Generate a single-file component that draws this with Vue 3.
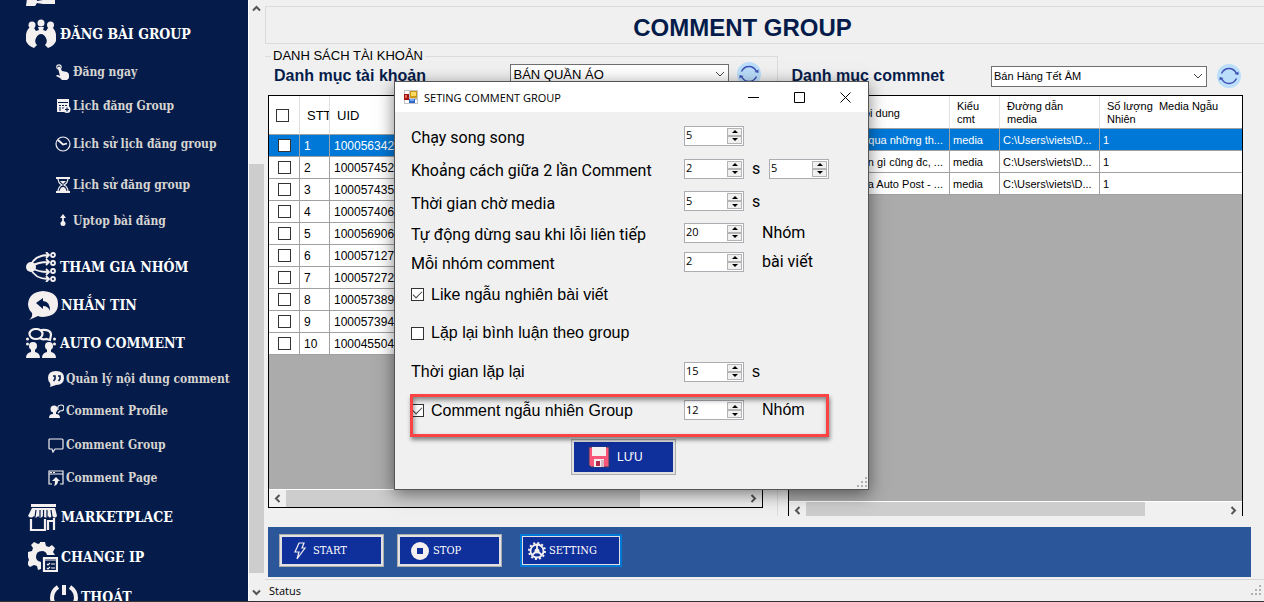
<script setup>
import { ref } from 'vue'

const accounts = ref([
  '100056342', '100057452', '100057435', '100057406', '100056906',
  '100057127', '100057272', '100057389', '100057394', '100045504',
])

const comments = ref([
  { text: 'qua những th...', kind: 'media', path: 'C:\\Users\\viets\\D...', count: 1 },
  { text: 'n gì cũng đc, ...', kind: 'media', path: 'C:\\Users\\viets\\D...', count: 1 },
  { text: 'ja Auto Post - ...', kind: 'media', path: 'C:\\Users\\viets\\D...', count: 1 },
])

const parallel = ref(5)
const delayMin = ref(2)
const delayMax = ref(5)
const mediaWait = ref(5)
const errorLimit = ref(20)
const perGroup = ref(2)
const repeatTime = ref(15)
const randomGroups = ref(12)
const likeRandom = ref(true)
const repeatComment = ref(false)
const commentRandom = ref(true)
</script>

<template>
  <div class="app">
    <div class="window">
      <nav class="sidebar">
        <a class="main cut" href="#" aria-label="Menu">
          <svg class="ico" viewBox="0 0 30 30"><path d="M2 14h8l1 10 6-1v-2h12v6H17l-6-1-2 3H0z" /></svg>
        </a>
        <a class="main" href="#">
          <svg class="ico" viewBox="0 0 30 30"><circle cx="15" cy="4" r="3.500" /><circle cx="6" cy="6" r="3.500" /><circle cx="24.500" cy="6" r="3.500" /><path d="M12 8h6l-1 3 3 1 2-3h5q3 3 3 8v5q-2 5-8 7l-3-3q3-3 1-7-2-4-5-4t-5 4q-2 4 1 7l-3 3q-6-2-8-7v-5q0-5 3-8h5l2 3 3-1z" /></svg>
          <span>ĐĂNG BÀI GROUP</span>
        </a>
        <div class="subs first">
          <a class="sub" href="#">
            <svg class="ico" viewBox="0 0 16 16"><circle cx="4" cy="3" r="2.200" class="line" /><path d="M3 3q1-1 2 0l2 4 5 1q2 1 2 3v3l-2 2H7l-2-2-4-2q1-2 4 0L3 4z" /></svg>
            <span>Đăng ngay</span>
          </a>
          <a class="sub" href="#">
            <svg class="ico" viewBox="0 0 16 16"><path d="M2 1h12v8H9v5H2z" /><path d="M3 4.500h10M4 7.500h2m1 0h2m1 0h2M4 10h2m1 0h2M4 12h2" class="cutline" /><circle cx="12" cy="11.500" r="3.500" /><path d="M12 9.500v4M10 11.500h4" class="cutline" /></svg>
            <span>Lịch đăng Group</span>
          </a>
          <a class="sub" href="#">
            <svg class="ico" viewBox="0 0 16 16"><circle cx="8" cy="8" r="7" class="line" /><path d="M3 4l5 4.500 4-1" class="line thick" /></svg>
            <span>Lịch sử lịch đăng group</span>
          </a>
          <a class="sub" href="#">
            <svg class="ico" viewBox="0 0 16 16"><path d="M1 1h14M1 15h14" class="line thick" /><path d="M3 1q0 5 4 7-4 2-4 7M13 1q0 5-4 7 4 2 4 7" class="line" /><path d="M5 4h6L8 7zM4.500 14q1-4 3.500-4t3.500 4z" /></svg>
            <span>Lịch sử đăng group</span>
          </a>
          <a class="sub" href="#">
            <svg class="ico" viewBox="0 0 16 16"><path d="M8 3v7" class="line thick" /><path d="M5 5l3-4 3 4z" /><circle cx="8" cy="10.500" r="2.500" /></svg>
            <span>Uptop bài đăng</span>
          </a>
        </div>
        <a class="main" href="#">
          <svg class="ico" viewBox="0 0 30 30"><circle cx="5" cy="15" r="5" /><path d="M4 14Q9 3 22 3M6 14q6-4 16-4M6 16q6 4 16 4M4 16q5 11 18 11M20 0l3 3-3 3M20 7l3 3-3 3M20 17l3 3-3 3M20 24l3 3-3 3" class="line thick" /><g class="line thick"><circle cx="27" cy="3" r="2" /><circle cx="27" cy="11" r="2" /><circle cx="27" cy="19" r="2" /><circle cx="27" cy="27" r="2" /></g></svg>
          <span>THAM GIA NHÓM</span>
        </a>
        <a class="main inset" href="#">
          <svg class="ico" viewBox="0 0 30 30"><path d="M15 1q15 1 15 13T15 27q-3 0-5-1l-9 4q4-3 3-7-4-4-4-9Q1 2 15 1z" /><path d="M8 13l7-5v3q7 0 7 10-2-5-7-5v3z" class="hole" /></svg>
          <span>NHẮN TIN</span>
        </a>
        <a class="main" href="#">
          <svg class="ico" viewBox="0 0 30 30"><ellipse cx="10" cy="6" rx="6.500" ry="5" class="line fat" /><path d="M15 2q10-1 10 5l-1 5-4-1q-4 1-6-1" class="line fat" /><circle cx="7" cy="18" r="4" /><circle cx="23" cy="18" r="4" /><path d="M0 30q0-5 5-6v-4h4v4q5 1 5 6zM16 30q0-5 5-6v-4h4v4q5 1 5 6z" /><circle cx="1.500" cy="11" r="1.500" /><circle cx="1.500" cy="16" r="1.500" /><circle cx="28.500" cy="11" r="1.500" /><circle cx="28.500" cy="16" r="1.500" /></svg>
          <span>AUTO COMMENT</span>
        </a>
        <div class="subs second">
          <a class="sub" href="#">
            <svg class="ico" viewBox="0 0 16 16"><path d="M8 0q8 0 8 7t-8 7l-6 2q1-2 0-4-2-2-2-5 0-7 8-7z" /><path d="M5 5h2v3L5.500 10M10 5h2v3l-1.500 2" class="hole-line" /></svg>
            <span>Quản lý nội dung comment</span>
          </a>
          <a class="sub" href="#">
            <svg class="ico" viewBox="0 0 16 16"><circle cx="6" cy="6" r="3.500" /><path d="M1 15q0-4 4-4V8h3v3q4 0 4 4z" /><path d="M10 7q-1-5 3-5 3 0 3 3t-4 3l-2 2" class="line" /></svg>
            <span>Comment Profile</span>
          </a>
          <a class="sub" href="#">
            <svg class="ico" viewBox="0 0 16 16"><path d="M2 2h12q1 0 1 1v8q0 1-1 1H7l-2 3-1-3H2q-1 0-1-1V3q0-1 1-1z" class="line" /></svg>
            <span>Comment Group</span>
          </a>
          <a class="sub" href="#">
            <svg class="ico" viewBox="0 0 16 16"><path d="M4 14H1V1h14v13h-3M1 4h14" class="line" /><path d="M2 2.500h2m1 0h2" class="line" /><path d="M8 7l4 4h-2q0 4-4 5 1-2 1-5H4z" /></svg>
            <span>Comment Page</span>
          </a>
        </div>
        <a class="main inset" href="#">
          <svg class="ico" viewBox="0 0 30 30"><path d="M3 2h25v3H3zM4 6h23l2 8q-2 3-5 0-2 3-4 0-2 3-5 0-2 3-5 0-2 3-4 0-3 3-6 0z" /><path d="M8 8l-1 7M12 8v7M15.500 8v7M19 8v7M23 8l1 7" class="cutline" /><path d="M3 17v11h14V17M20 28V19h6v9M26 16v3" class="line fat" /></svg>
          <span>MARKETPLACE</span>
        </a>
        <a class="main inset tall" href="#">
          <svg class="ico" viewBox="0 0 30 30"><path d="M12 0h5l1 4 3 1 3-2 3 3-2 4 2 3H19q-1-4-5-4-6 0-6 6 0 4 5 5v7l-3 1-1-4-3-1-4 2-3-3 2-4-1-3H0v-5l4-1 1-3-2-3 3-3 4 2 2-1z" /><path d="M16 16h13v13H16z" class="line fat boxed" /><path d="M17 18h11M19 22l1 1 2-2m1 1h4m-8 4l1 1 2-2m1 1h4" class="line" /></svg>
          <span>CHANGE IP</span>
        </a>
        <a class="main exit" href="#">
          <svg class="ico" viewBox="0 0 30 30"><path d="M9 5Q3 9 3 16q1 10 12 11 11-1 12-11 0-7-6-11M15 3v10" class="line bold" /></svg>
          <span>THOÁT</span>
        </a>
      </nav>

      <div class="vscroll">
        <button class="arrow" aria-label="Scroll up"><svg viewBox="0 0 9 9"><path d="M1 6.500l3.500-3.500L8 6.500" /></svg></button>
        <div class="before"></div>
        <div class="thumb"></div>
        <div class="after"></div>
        <button class="arrow" aria-label="Scroll down"><svg viewBox="0 0 9 9"><path d="M1 2.500L4.500 6 8 2.500" /></svg></button>
      </div>

      <main class="content">
        <header class="title"><h1>COMMENT GROUP</h1></header>

        <div class="columns">
          <fieldset class="accounts">
            <legend>DANH SÁCH TÀI KHOẢN</legend>
            <div class="bar left">
              <h2>Danh mục tài khoản</h2>
              <div class="picker">
                <span class="combo large">
                  <select aria-label="Danh mục tài khoản"><option>BÁN QUẦN ÁO</option></select>
                  <svg viewBox="0 0 10 6"><path d="M1 1l4 4 4-4" /></svg>
                </span>
                <button class="refresh" aria-label="Refresh">
                  <svg viewBox="0 0 24 24"><circle cx="12" cy="12" r="12" /><path d="M4.500 9.500Q7 4.500 12 4.500q5 0 7.500 5M19.500 14.500q-2.500 5-7.500 5-5 0-7.500-5" class="arc" /><path d="M17.500 10l4 1V7.500zM6.500 14l-4-1v3.500z" class="tip" /></svg>
                </button>
              </div>
            </div>
            <div class="grid">
              <div class="rows">
                <table class="acc">
                  <colgroup><col class="c-check"><col class="c-no"><col></colgroup>
                  <thead>
                    <tr><th><input type="checkbox" aria-label="Select all"></th><th class="clip">STT</th><th>UID</th></tr>
                  </thead>
                  <tbody>
                    <tr v-for="(uid, i) in accounts" :key="uid" :class="{ on: i === 0 }">
                      <td><input type="checkbox" :aria-label="'Select ' + uid"></td>
                      <td>{{ i + 1 }}</td>
                      <td>{{ uid }}</td>
                    </tr>
                  </tbody>
                </table>
              </div>
              <div class="hscroll">
                <button class="arrow" aria-label="Scroll left"><svg viewBox="0 0 9 9"><path d="M6.500 1L3 4.500 6.500 8" /></svg></button>
                <div class="track"><div class="thumb"></div></div>
                <button class="arrow" aria-label="Scroll right"><svg viewBox="0 0 9 9"><path d="M2.500 1L6 4.500 2.500 8" /></svg></button>
              </div>
            </div>
          </fieldset>

          <section class="comments">
            <div class="bar right">
              <h2>Danh mục commnet</h2>
              <div class="picker">
                <span class="combo">
                  <select aria-label="Danh mục commnet"><option>Bán Hàng Tết ÂM</option></select>
                  <svg viewBox="0 0 10 6"><path d="M1 1l4 4 4-4" /></svg>
                </span>
                <button class="refresh" aria-label="Refresh">
                  <svg viewBox="0 0 24 24"><circle cx="12" cy="12" r="12" /><path d="M4.500 9.500Q7 4.500 12 4.500q5 0 7.500 5M19.500 14.500q-2.500 5-7.500 5-5 0-7.500-5" class="arc" /><path d="M17.500 10l4 1V7.500zM6.500 14l-4-1v3.500z" class="tip" /></svg>
                </button>
              </div>
            </div>
            <div class="grid open">
              <div class="rows">
                <table class="com">
                  <colgroup><col><col class="c-kind"><col class="c-path"><col class="c-count"></colgroup>
                  <thead>
                    <tr><th>Nội dung</th><th>Kiểu<br>cmt</th><th>Đường dẫn<br>media</th><th>Số lượng&nbsp; Media Ngẫu<br>Nhiên</th></tr>
                  </thead>
                  <tbody>
                    <tr v-for="(c, i) in comments" :key="c.text" :class="{ on: i === 0 }">
                      <td>{{ c.text }}</td><td>{{ c.kind }}</td><td>{{ c.path }}</td><td>{{ c.count }}</td>
                    </tr>
                  </tbody>
                </table>
              </div>
              <div class="hscroll">
                <button class="arrow" aria-label="Scroll left"><svg viewBox="0 0 9 9"><path d="M6.500 1L3 4.500 6.500 8" /></svg></button>
                <div class="track"><div class="thumb wide"></div></div>
                <button class="arrow" aria-label="Scroll right"><svg viewBox="0 0 9 9"><path d="M2.500 1L6 4.500 2.500 8" /></svg></button>
              </div>
            </div>
          </section>
        </div>

        <div class="actions">
          <button class="act">
            <svg class="ico bolt" viewBox="0 0 12 18"><path d="M5 1h5L8 6h3L3 17l2-7H1z" class="line" /></svg>
            <span>START</span>
          </button>
          <button class="act stop">
            <svg class="ico disc" viewBox="0 0 18 18"><circle cx="9" cy="9" r="9" /><path d="M6 6h6v6H6z" class="blue" /></svg>
            <span>STOP</span>
          </button>
          <button class="act focus">
            <svg class="ico gear" viewBox="0 0 18 18"><circle cx="9" cy="9" r="6.500" class="line thick" /><circle cx="9" cy="9" r="8" class="teeth" /><circle cx="9" cy="9" r="2.500" /><path d="M9 9V3M9 9l-5 4M9 9l5 4" class="line thick" /></svg>
            <span>SETTING</span>
          </button>
        </div>

        <footer class="status">
          <span>Status</span>
          <svg class="grip" viewBox="0 0 11 11"><path d="M8 0h2v2H8zM4 4h2v2H4zM8 4h2v2H8zM0 8h2v2H0zM4 8h2v2H4zM8 8h2v2H8z" /></svg>
        </footer>
      </main>
    </div>

    <div class="dialog" role="dialog" aria-label="SETING COMMENT GROUP">
      <div class="caption">
        <svg class="logo" viewBox="0 0 14 14"><path d="M0 0h14v14H0z" fill="#c4c4c4" /><path d="M1 1h4v3H1zM1 10h4v3H1zM11 10h2v3h-2z" fill="#fff" /><path d="M6 1h7v7H6z" fill="#c99a18" /><path d="M7 2h5v4H7z" fill="#ffd862" /><path d="M0 4h5v6H0z" fill="#a31515" /><path d="M1 5h2v3H1z" fill="#e66a50" /><path d="M5 9h6v4H5z" fill="#2f68c8" /><path d="M6 9h4v2H6z" fill="#79aaf5" /></svg>
        <span class="name">SETING COMMENT GROUP</span>
        <button aria-label="Minimize"><svg viewBox="0 0 11 11"><path d="M0 5.500h11" /></svg></button>
        <button aria-label="Maximize"><svg viewBox="0 0 11 11"><path d="M0.500 0.500h10v10h-10z" /></svg></button>
        <button aria-label="Close"><svg viewBox="0 0 11 11"><path d="M0.500 0.500l10 10M10.500 0.500l-10 10" /></svg></button>
      </div>

      <form class="form" @submit.prevent>
        <div class="line-row">
          <label for="parallel">Chạy song song</label>
          <span class="spin"><input id="parallel" v-model="parallel" type="number"><span class="ud"><button type="button" aria-label="Up" @click="parallel++"></button><button type="button" aria-label="Down" @click="parallel--"></button></span></span>
        </div>
        <div class="line-row">
          <label for="delay-min">Khoảng cách giữa 2 lần Comment</label>
          <span class="spin"><input id="delay-min" v-model="delayMin" type="number"><span class="ud"><button type="button" aria-label="Up" @click="delayMin++"></button><button type="button" aria-label="Down" @click="delayMin--"></button></span></span>
          <span class="sec">s</span>
          <span class="spin"><input v-model="delayMax" type="number" aria-label="Khoảng cách tối đa"><span class="ud"><button type="button" aria-label="Up" @click="delayMax++"></button><button type="button" aria-label="Down" @click="delayMax--"></button></span></span>
        </div>
        <div class="line-row">
          <label for="media-wait">Thời gian chờ media</label>
          <span class="spin"><input id="media-wait" v-model="mediaWait" type="number"><span class="ud"><button type="button" aria-label="Up" @click="mediaWait++"></button><button type="button" aria-label="Down" @click="mediaWait--"></button></span></span>
          <span class="sec">s</span>
        </div>
        <div class="line-row">
          <label for="error-limit">Tự động dừng sau khi lỗi liên tiếp</label>
          <span class="spin"><input id="error-limit" v-model="errorLimit" type="number"><span class="ud"><button type="button" aria-label="Up" @click="errorLimit++"></button><button type="button" aria-label="Down" @click="errorLimit--"></button></span></span>
          <span class="unit">Nhóm</span>
        </div>
        <div class="line-row">
          <label for="per-group">Mỗi nhóm comment</label>
          <span class="spin"><input id="per-group" v-model="perGroup" type="number"><span class="ud"><button type="button" aria-label="Up" @click="perGroup++"></button><button type="button" aria-label="Down" @click="perGroup--"></button></span></span>
          <span class="unit">bài viết</span>
        </div>
        <div class="line-row check">
          <label><input v-model="likeRandom" type="checkbox">Like ngẫu nghiên bài viết</label>
        </div>
        <div class="line-row check">
          <label><input v-model="repeatComment" type="checkbox">Lặp lại bình luận theo group</label>
        </div>
        <div class="line-row check">
          <label for="repeat-time">Thời gian lặp lại</label>
          <span class="spin"><input id="repeat-time" v-model="repeatTime" type="number"><span class="ud"><button type="button" aria-label="Up" @click="repeatTime++"></button><button type="button" aria-label="Down" @click="repeatTime--"></button></span></span>
          <span class="sec">s</span>
        </div>
        <div class="line-row check marked">
          <label><input v-model="commentRandom" type="checkbox">Comment ngẫu nhiên Group</label>
          <span class="spin"><input v-model="randomGroups" type="number" aria-label="Số nhóm"><span class="ud"><button type="button" aria-label="Up" @click="randomGroups++"></button><button type="button" aria-label="Down" @click="randomGroups--"></button></span></span>
          <span class="unit">Nhóm</span>
        </div>
        <button class="save" type="submit">
          <svg viewBox="0 0 22 22"><path d="M1 1h20v20H3l-2-2z" fill="#fa5578" stroke="#333c66" /><path d="M4 1h14v9H4z" fill="#f5f0f0" /><path d="M6 13h10v8H6z" fill="#f5f0f0" /><path d="M8 15h4v5H8z" fill="#b5294b" /><path d="M13 14h3v7h-3z" fill="#d8b8c2" /></svg>
          <span>LƯU</span>
        </button>
      </form>
      <svg class="grip corner" viewBox="0 0 11 11"><path d="M8 0h2v2H8zM4 4h2v2H4zM8 4h2v2H8zM0 8h2v2H0zM4 8h2v2H4zM8 8h2v2H8z" /></svg>
    </div>
  </div>
</template>

<style>
html, body, #app { height: 100%; }
body { margin: 0; }
</style>

<style scoped>
.app {
  position: relative;
  height: 100vh;
  overflow: hidden;
  background: #f0f0f0;
  color: #000;
  font-family: "Liberation Sans", Arial, sans-serif;
}
.app *, .app *::before, .app *::after { box-sizing: border-box; }
.window { display: flex; height: 100%; border-bottom: 1px solid #333; }
button { margin: 0; padding: 0; border: 0; background: none; color: inherit; font: inherit; }
h1, h2 { margin: 0; color: #051c4b; }

/* icons */
.ico { flex: none; fill: #f5f0f0; }
.line { fill: none; stroke: #f5f0f0; stroke-width: 1.2; }
.thick { stroke-width: 1.8; }
.fat { stroke-width: 2.2; }
.bold { stroke-width: 4; }
.hole { fill: #051c4b; }
.boxed { fill: #051c4b; }
.cutline { fill: none; stroke: #051c4b; stroke-width: 1.2; }
.hole-line { fill: none; stroke: #051c4b; stroke-width: 1.6; }
.teeth { fill: none; stroke: #f5f0f0; stroke-width: 2; stroke-dasharray: 2 2.2; }
.blue { fill: #0f2f9b; }

/* sidebar */
.sidebar {
  flex: none;
  width: 248px;
  overflow: hidden;
  background: #051c4b;
  font-family: "DejaVu Serif Condensed", "DejaVu Serif", serif;
  font-weight: 700;
}
.sidebar a { display: flex; align-items: center; color: #fff; text-decoration: none; white-space: nowrap; }
.main { height: 38px; padding-left: 26px; gap: 4px; font-size: 14px; }
.main .ico { width: 30px; height: 30px; }
.main.inset { padding-left: 28px; gap: 3px; }
.main.tall { height: 42px; }
.main.exit { padding-left: 49px; gap: 2px; }
.main.cut { height: 15px; align-items: flex-end; padding-bottom: 8px; }
.sidebar .sub { gap: 2px; color: #d6d4d0; font-size: 12px; }
.sub .ico { width: 16px; height: 16px; }
.subs { display: grid; }
.subs.first { grid-template-rows: 38px 30px 46px 36px 36px; padding: 0 0 9px 55px; }
.subs.second { grid-template-rows: 34px 30px 38px 28px; padding: 0 0 6px 48px; }

/* scroll bars */
.vscroll { display: flex; flex: none; flex-direction: column; width: 17px; padding-right: 1px; border-left: 1px solid #fff; }
.arrow { display: flex; flex: none; align-items: center; justify-content: center; width: 17px; height: 17px; }
.vscroll .arrow { width: 15px; }
.arrow svg { width: 9px; height: 9px; fill: none; stroke: #555; stroke-width: 2; }
.before { flex: 147; }
.vscroll .thumb { flex: 409; background: #cdcdcd; }
.after { flex: 11; }
.hscroll { display: flex; flex: none; height: 18px; overflow: hidden; border-top: 1px solid #fff; background: #f0f0f0; }
.open .hscroll { height: 15px; }
.track { flex: 1; }
.track .thumb { width: 77%; height: 100%; background: #cdcdcd; }
.track .wide { width: 81%; }

/* content */
.content { display: flex; flex: 1; flex-direction: column; min-width: 0; padding-top: 6px; }
.title { flex: none; height: 38px; padding-right: 45px; border: 1px solid #dcdcdc; border-right: 0; text-align: center; }
.title h1 { padding-top: 3px; font-size: 24px; line-height: 36px; }
.columns {
  display: grid;
  flex: 1;
  grid-template-columns: minmax(0, 514fr) minmax(0, 455fr);
  gap: 10px;
  min-height: 0;
  padding: 4px 21px 0 0;
}
.accounts {
  display: flex;
  flex-direction: column;
  min-width: 0;
  min-height: 0;
  margin: 0;
  padding: 0 14px 8px 3px;
  border: 1px solid #dcdcdc;
  border-width: 1px 1px 0 0;
}
.accounts legend { margin-left: 3px; padding: 0 2px; font-size: 13px; line-height: 16px; }
.comments { display: flex; flex-direction: column; min-width: 0; min-height: 0; }
.bar { display: flex; flex: none; justify-content: space-between; }
.bar h2 { font-size: 16px; line-height: 24px; }
.bar.left { height: 31px; padding: 0 2px 0 6px; }
.bar.right { height: 47px; padding: 16px 2px 0 3px; }
.picker { display: flex; align-items: center; height: 20px; gap: 8px; }
.right .picker { height: 24px; gap: 10px; }
.combo { display: grid; align-items: center; width: 216px; }
.combo.large { width: 219px; }
.combo select, .combo svg { grid-area: 1 / 1; }
.combo select {
  height: 21px;
  padding: 0 20px 0 2px;
  border: 1px solid #707070;
  border-radius: 0;
  background: #fff;
  color: #000;
  font-family: inherit;
  font-size: 11px;
  appearance: none;
}
.combo.large select { font-size: 13px; }
.combo svg { justify-self: end; width: 10px; height: 6px; margin-right: 4px; fill: none; stroke: #444; pointer-events: none; }
.refresh { width: 24px; height: 24px; }
.refresh svg { display: block; width: 24px; height: 24px; fill: #bbdefb; }
.refresh .arc { fill: none; stroke: #3f51b5; stroke-width: 1.5; }
.refresh .tip { fill: #3f51b5; }

/* data grids */
.grid { display: flex; flex: 1; flex-direction: column; min-height: 0; border: 1px solid #000; background: #ababab; }
.grid.open { border-bottom: 0; }
.rows { flex: 1; min-height: 0; overflow: hidden; }
table { width: 100%; border-collapse: separate; border-spacing: 0; table-layout: fixed; background: #fff; }
th, td { overflow: hidden; padding: 0 4px; border-right: 1px solid #a0a0a0; border-bottom: 1px solid #a0a0a0; text-align: left; white-space: nowrap; }
th { padding-left: 7px; border-right-color: #e0e0e0; font-weight: 400; }
td { height: 22px; }
.on td { background: #0078d7; color: #fff; }
.acc th { height: 39px; font-size: 13px; }
.acc td { font-size: 12px; }
.acc .clip { padding-right: 0; }
.acc td:first-child { padding-left: 9px; }
.c-check { width: 31px; }
.c-no { width: 30px; }
.com { font-size: 11px; line-height: 13px; }
.com th { height: 33px; padding-top: 2px; }
.com th:last-child, .com td:last-child { border-right: 0; }
.com td { padding: 2px 3px 0; }
.com th:first-child { padding-right: 49px; text-align: right; }
.com td:first-child { padding-right: 6px; text-align: right; }
.c-kind { width: 50px; }
.c-path { width: 100px; }
.c-count { width: 142px; }

input[type="checkbox"] {
  display: block;
  flex: none;
  width: 13px;
  height: 13px;
  margin: 0;
  border: 1px solid #333;
  background: #fff;
  appearance: none;
}
input[type="checkbox"]:checked::after {
  display: block;
  width: 9px;
  height: 5px;
  margin: 2px 1px;
  border: solid #444;
  border-width: 0 0 1px 1px;
  content: "";
  transform: rotate(-45deg);
}

/* bottom bars */
.actions { display: flex; flex: none; align-items: center; height: 50px; margin: 11px 13px 0 3px; padding: 0 11px 3px; background: #2b579a; gap: 13px; }
.act {
  display: flex;
  align-items: center;
  width: 105px;
  height: 33px;
  padding-left: 13px;
  border: 1px solid #adadad;
  background: #0f2f9b;
  box-shadow: inset 0 0 0 2px #e1e1e1;
  color: #fff;
  font-family: "DejaVu Serif Condensed", "DejaVu Serif", serif;
  font-size: 11px;
  gap: 6px;
}
.act.stop { gap: 4px; }
.act.focus { width: 102px; margin-left: 5px; padding-left: 6px; border: 2px solid #0078d7; box-shadow: inset 0 0 0 1px #e1e1e1; }
.act.focus { gap: 3px; }
.bolt { width: 14px; height: 18px; }
.disc { width: 18px; height: 18px; }
.gear { width: 18px; height: 18px; }
.status {
  display: flex;
  flex: none;
  align-items: center;
  justify-content: space-between;
  height: 22px;
  margin-top: 2px;
  padding: 0 2px 0 4px;
  border-top: 1px solid #d7d7d7;
  font-family: "Open Sans", "Noto Sans", sans-serif;
  font-size: 11px;
}
.grip { width: 11px; height: 11px; fill: #b0b0b0; }

/* dialog */
.dialog {
  position: absolute;
  top: 81px;
  left: 394px;
  width: 475px;
  border: 1px solid #555;
  background: #f0f0f0;
  box-shadow: 0 4px 16px rgba(0, 0, 0, 0.5);
}
.caption { display: flex; align-items: center; height: 30px; background: #fff; font-family: "Open Sans", "Noto Sans", sans-serif; }
.logo { width: 14px; height: 14px; margin: 0 6px 0 9px; }
.name { flex: 1; font-size: 11px; }
.caption button { display: flex; align-items: center; justify-content: center; width: 46px; height: 30px; }
.caption button svg { width: 11px; height: 11px; fill: none; stroke: #000; }
.form {
  display: grid;
  grid-template-rows: 33px 33px 32px 31px 27px 38px 39px 39px 38px;
  padding: 7px 0 14px 16px;
  font-family: Roboto, sans-serif;
  font-size: 16px;
}
.line-row { position: relative; display: flex; align-items: center; }
.line-row > label { display: flex; align-items: center; width: 273px; padding-top: 4px; white-space: nowrap; gap: 7px; }
.check { font-family: "Liberation Sans", Arial, sans-serif; }
.line-row.check > label { padding-top: 1px; }
.spin { display: flex; flex: none; width: 60px; height: 20px; border: 1px solid #abadb3; background: #fff; }
.spin input {
  flex: 1;
  min-width: 0;
  height: 16px;
  padding: 0 1px;
  border: 0;
  background: none;
  color: #000;
  font-family: "Open Sans", "Noto Sans", sans-serif;
  font-size: 11px;
  appearance: textfield;
}
.spin input::-webkit-inner-spin-button { appearance: none; }
.ud { display: flex; flex: none; flex-direction: column; width: 16px; padding: 1px 1px 1px 0; }
.ud button { display: flex; flex: 1; align-items: center; justify-content: center; border: 1px solid #b4b4b4; background: #f0f0f0; }
.ud button::after { border: 3px solid transparent; border-top: 0; border-bottom-color: #000; content: ""; }
.ud button:last-child::after { border-top: 3px solid #000; border-bottom: 0; }
.sec { width: 25px; padding-left: 8px; }
.unit { padding-left: 18px; }
.marked::after {
  position: absolute;
  top: 3px;
  left: -1px;
  width: 419px;
  height: 43px;
  border: 3px solid #fc4343;
  box-shadow: 1px 3px 4px rgba(0, 0, 0, 0.45), inset 1px 3px 5px rgba(0, 0, 0, 0.45);
  content: "";
  pointer-events: none;
}
.save {
  display: flex;
  align-items: center;
  width: 105px;
  height: 36px;
  margin: 10px 0 0 160px;
  padding-left: 16px;
  border: 1px solid #adadad;
  background: #0f2f9b;
  box-shadow: inset 0 0 0 2px #e1e1e1;
  color: #fff;
  font-family: "Liberation Sans", Arial, sans-serif;
  font-size: 12px;
  gap: 7px;
}
.save svg { width: 22px; height: 22px; }
.corner { position: absolute; right: 0; bottom: 1px; }
</style>
